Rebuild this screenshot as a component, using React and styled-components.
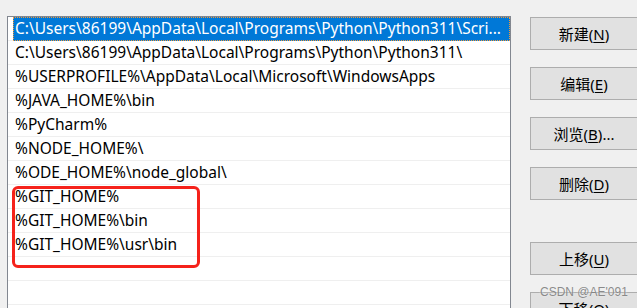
import React from "react";
import styled, { createGlobalStyle, css } from "styled-components";

const GlobalStyle = createGlobalStyle`
  html, body {
    margin: 0;
    padding: 0;
    background: #f0f0f0;
    overflow: hidden;
  }
  body {
    font-family: "Noto Sans", "Noto Sans CJK SC", sans-serif;
  }
`;

const paths = [
  "C:\\Users\\86199\\AppData\\Local\\Programs\\Python\\Python311\\Scri...",
  "C:\\Users\\86199\\AppData\\Local\\Programs\\Python\\Python311\\",
  "%USERPROFILE%\\AppData\\Local\\Microsoft\\WindowsApps",
  "%JAVA_HOME%\\bin",
  "%PyCharm%",
  "%NODE_HOME%\\",
  "%ODE_HOME%\\node_global\\",
  "%GIT_HOME%",
  "%GIT_HOME%\\bin",
  "%GIT_HOME%\\usr\\bin",
  "",
  "",
  "",
];

const buttons = [
  { label: "新建", key: "N" },
  { label: "编辑", key: "E" },
  { label: "浏览", key: "B", tail: "..." },
  { label: "删除", key: "D", spaceAfter: true },
  { label: "上移", key: "U" },
  { label: "下移", key: "O" },
];

const App = () => {
  return (
    <Page>
      <GlobalStyle />
      <ListBox>
        {paths.map((p, i) => (
          <Row key={i}>
            <Item selected={i === 0}>{p}</Item>
          </Row>
        ))}
        <Mark />
      </ListBox>
      <Buttons>
        {buttons.map((b) => (
          <Button key={b.key} spaceAfter={b.spaceAfter}>
            {b.label}(<u>{b.key}</u>){b.tail}
          </Button>
        ))}
      </Buttons>
      <Watermark>CSDN @AE'091</Watermark>
    </Page>
  );
};

const Page = styled.div`
  position: relative;
  display: flex;
  align-items: flex-start;
  gap: 19px;
  height: 308px;
  padding: 16px 0 0 7px;
  box-sizing: border-box;
  overflow: hidden;
`;

const ListBox = styled.div`
  position: relative;
  width: 502px;
  height: 320px;
  flex: none;
  background: #fff;
  border: 1px solid #828790;
  border-bottom: none;
`;

const Row = styled.div`
  height: 24px;
  box-sizing: border-box;
  border-bottom: 1px solid #efefef;
`;

const Item = styled.div`
  height: 24px;
  margin-left: 5px;
  padding-left: 2px;
  box-sizing: border-box;
  font-size: 15.5px;
  line-height: 23px;
  color: #000;
  white-space: nowrap;
  overflow: hidden;
  ${(p) =>
    p.selected &&
    css`
      background: #0078d7;
      color: #fff;
      outline: 1px dotted #f39a3a;
      outline-offset: -1px;
    `}
`;

const Mark = styled.div`
  position: absolute;
  left: 4px;
  top: 169px;
  width: 188px;
  height: 82px;
  border: 3px solid #f5221b;
  border-radius: 6px;
  box-sizing: border-box;
`;

const Buttons = styled.div`
  display: flex;
  flex-direction: column;
  gap: 17px;
  padding-top: 1px;
`;

const Button = styled.button`
  width: 108px;
  height: 33px;
  flex: none;
  margin-bottom: ${(p) => (p.spaceAfter ? "25px" : "0")};
  background: #e1e1e1;
  border: 1px solid #adadad;
  font-family: "Noto Sans", "Noto Sans CJK SC", sans-serif;
  font-size: 15px;
  color: #000;
  padding: 0;
  u {
    text-underline-offset: 2px;
  }
`;

const Watermark = styled.div`
  position: absolute;
  left: 540px;
  top: 285px;
  font-family: "Liberation Sans", sans-serif;
  font-size: 12px;
  color: rgba(120, 120, 120, 0.85);
  text-shadow: 0 0 2px #f0f0f0;
`;

export default App;
